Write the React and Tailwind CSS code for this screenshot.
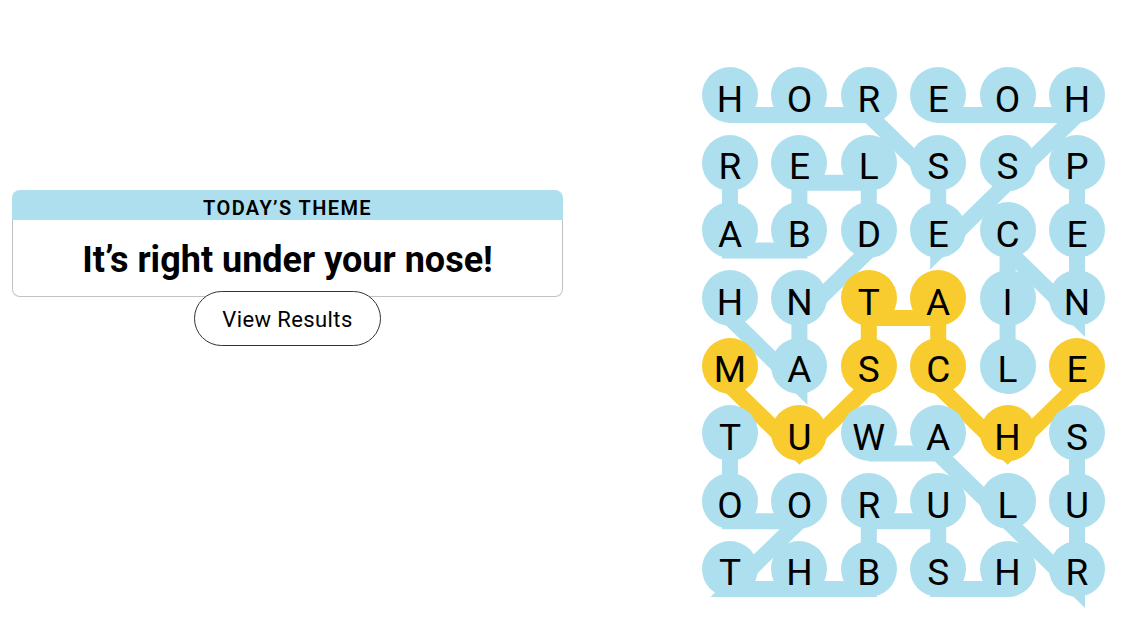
import React from 'react';

const GRID = [
  'HOREOH',
  'RELSSP',
  'ABDECE',
  'HNTAIN',
  'MASCLE',
  'TUWAHS',
  'OORULU',
  'THBSHR',
];

const BLUE = '#aedfee';
const YELLOW = '#f8cc2e';

// word paths, in the order they were traced
const WORDS = [
  { cells: [[0, 0], [0, 1], [0, 2], [1, 3], [2, 3], [1, 4], [0, 5], [0, 4], [0, 3]], span: false }, // HORSESHOE
  { cells: [[3, 0], [4, 1], [3, 1], [2, 2], [1, 2], [1, 1], [2, 1], [2, 0], [1, 0]], span: false }, // HANDLEBAR
  { cells: [[1, 5], [2, 5], [3, 5], [2, 4], [3, 4], [4, 4]], span: false }, // PENCIL
  { cells: [[5, 0], [6, 0], [6, 1], [7, 0], [7, 1], [7, 2], [6, 2], [6, 3], [7, 3], [7, 4]], span: false }, // TOOTHBRUSH
  { cells: [[5, 2], [5, 3], [6, 4], [7, 5], [6, 5], [5, 5]], span: false }, // WALRUS
  { cells: [[4, 0], [5, 1], [4, 2], [3, 2], [3, 3], [4, 3], [5, 4], [4, 5]], span: true }, // MUSTACHE
];

const SIZE = 56;
const STEP_X = 69.4;
const STEP_Y = 67.7;
const LINE_DROP = 20;

const spangram = new Set(
  WORDS.filter((w) => w.span).flatMap((w) => w.cells.map(([r, c]) => `${r}-${c}`))
);

const Board = () => {
  const width = SIZE + STEP_X * 5;
  const height = SIZE + STEP_Y * 7;

  return (
    <div className="relative" style={{ width, height }}>
      {/* connector lines sit under the letters */}
      <svg className="absolute left-0 top-0 overflow-visible" width={width} height={height}>
        {WORDS.map((w, i) => (
          <polyline
            key={i}
            points={w.cells
              .map(([r, c]) => `${SIZE / 2 + c * STEP_X},${SIZE / 2 + r * STEP_Y + LINE_DROP}`)
              .join(' ')}
            fill="none"
            stroke={w.span ? YELLOW : BLUE}
            strokeWidth={16}
            strokeLinejoin="miter"
            strokeMiterlimit={4}
          />
        ))}
      </svg>

      <div className="relative grid grid-cols-[repeat(6,56px)] grid-rows-[repeat(8,56px)] gap-x-[13.4px] gap-y-[11.7px]">
        {GRID.map((row, r) =>
          row.split('').map((ch, c) => (
            <div
              key={`${r}-${c}`}
              className={`flex h-14 w-14 items-center justify-center rounded-full pt-2 text-[37px] leading-none text-black ${
                spangram.has(`${r}-${c}`) ? 'bg-[#f8cc2e]' : 'bg-[#aedfee]'
              }`}
            >
              {ch}
            </div>
          ))
        )}
      </div>
    </div>
  );
};

export default function App() {
  return (
    <div className="flex h-[631px] w-full bg-white font-['Roboto',_'Liberation_Sans',_sans-serif] text-black">
      {/* Theme card */}
      <div className="ml-3 mt-[190px] flex w-[551px] flex-col items-center">
        <div className="w-full">
          <div className="flex h-[30px] items-center justify-center rounded-t-lg bg-[#aedfee] pt-[5px] text-[20px] font-semibold tracking-[1.4px]">
            TODAY’S THEME
          </div>
          <div className="flex h-[77px] items-center justify-center rounded-b-lg border border-t-0 border-[#c2c2c2] pt-[4px] text-[36px] font-bold">
            It’s right under your nose!
          </div>
        </div>
        <button className="-mt-[6px] h-[55px] w-[187px] rounded-full border border-[#333] bg-white pt-[2px] text-[22px] tracking-[0.4px]">
          View Results
        </button>
      </div>

      {/* Board */}
      <div className="ml-[139px] mt-[67px]">
        <Board />
      </div>
    </div>
  );
}
